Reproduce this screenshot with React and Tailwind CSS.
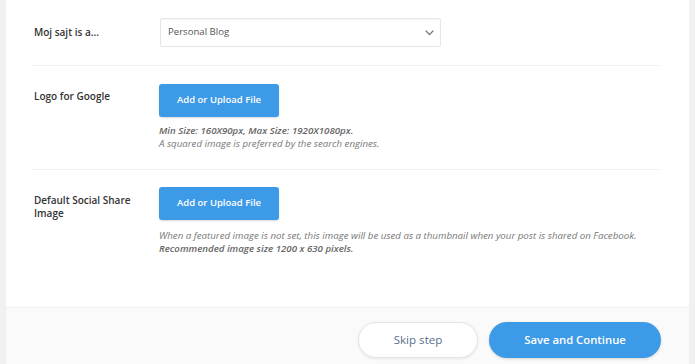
import React from "react";

function Chevron() {
  return (
    <svg width="9" height="6" viewBox="0 0 9 6" fill="none">
      <path d="M1 1l3.5 3.5L8 1" stroke="#777" strokeWidth="1.2" strokeLinecap="round" strokeLinejoin="round" />
    </svg>
  );
}

function UploadButton() {
  return (
    <button className="w-[120px] h-[33px] rounded-[3px] bg-[#3d9ae6] text-white text-[9.5px] font-semibold shadow-[0_1px_2px_rgba(0,0,0,0.15)]">
      Add or Upload File
    </button>
  );
}

export default function App() {
  return (
    <div
      className="w-[695px] h-[364px] bg-[#f1f1f1] pl-[6px] pr-[6px] overflow-hidden"
      style={{ fontFamily: '"Open Sans", "Liberation Sans", sans-serif' }}
    >
      <div className="h-full bg-white flex flex-col">
        <div className="flex-1 pl-[27px] pr-[29px]">
          <div className="flex items-center pt-[18px] pb-[18px] border-b border-[#f0f0f0]">
            <div className="w-[127px] pl-[1px] text-[10px] font-semibold text-[#333]">Moj sajt is a...</div>
            <div className="w-[281px] h-[29px] border border-[#e6e6e6] rounded-[2px] shadow-[inset_0_1px_2px_rgba(0,0,0,0.04)] flex items-center justify-between pl-[7px] pr-[6px]">
              <span className="text-[9.6px] text-[#555]">Personal Blog</span>
              <Chevron />
            </div>
          </div>

          <div className="flex pt-[18px] pb-[19px] border-b border-[#f0f0f0]">
            <div className="w-[126px] pl-[1px] pt-[6px] text-[10px] leading-[13px] font-semibold text-[#333]">Logo for Google</div>
            <div className="flex flex-col">
              <UploadButton />
              <div className="mt-[8px] text-[9.7px] leading-[12.5px] italic text-[#777]">
                <div className="font-semibold text-[#666]">Min Size: 160X90px, Max Size: 1920X1080px.</div>
                <div>A squared image is preferred by the search engines.</div>
              </div>
            </div>
          </div>

          <div className="flex pt-[17px]">
            <div className="w-[126px] pl-[1px] pt-[7px] pr-[8px] text-[10px] leading-[12.5px] font-semibold text-[#333]">Default Social Share Image</div>
            <div className="flex flex-col">
              <UploadButton />
              <div className="mt-[10px] text-[9.7px] leading-[12.5px] italic text-[#777]">
                <div>When a featured image is not set, this image will be used as a thumbnail when your post is shared on Facebook.</div>
                <div className="font-semibold text-[#666]">Recommended image size 1200 x 630 pixels.</div>
              </div>
            </div>
          </div>
        </div>

        <div className="h-[57px] bg-[#fafafa] border-t border-[#efefef] flex justify-end gap-[11px] pt-[14px] pr-[28px]">
          <button className="w-[120px] h-[36px] rounded-full bg-white border border-[#e4e4e4] text-[11.6px] text-[#5a7090] shadow-[0_1px_3px_rgba(0,0,0,0.08)]">
            Skip step
          </button>
          <button className="w-[172px] h-[36px] rounded-full bg-[#3d9ae6] text-white text-[11.3px] font-semibold shadow-[0_1px_3px_rgba(0,0,0,0.15)]">
            Save and Continue
          </button>
        </div>
      </div>
    </div>
  );
}
